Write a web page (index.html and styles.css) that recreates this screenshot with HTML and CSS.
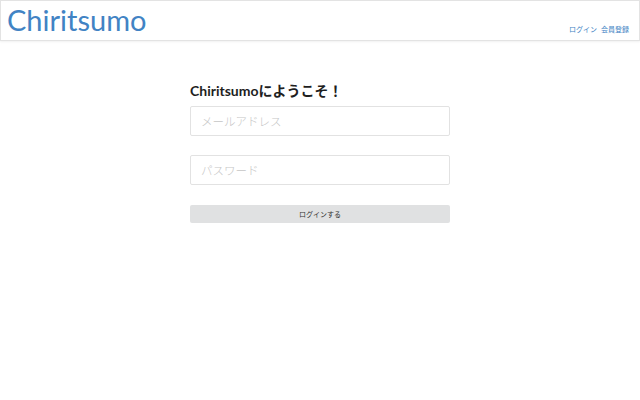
FILE: index.html
```html
<!DOCTYPE html>
<html lang="ja">
<head>
<meta charset="utf-8">
<title>Chiritsumo</title>
<link rel="stylesheet" href="styles.css">
</head>
<body>
<header class="topbar">
  <a class="logo" href="#">Chiritsumo</a>
  <nav class="nav">
    <a href="#">ログイン</a>
    <a href="#">会員登録</a>
  </nav>
</header>
<main class="main">
  <form class="login">
    <h1 class="title">Chiritsumoにようこそ！</h1>
    <input class="field" type="email" placeholder="メールアドレス">
    <input class="field" type="password" placeholder="パスワード">
    <button class="btn" type="button">ログインする</button>
  </form>
</main>
</body>
</html>
```
FILE: styles.css
```css
html, body {
  margin: 0;
  padding: 0;
  background: #fff;
  font-family: Lato, "Noto Sans CJK JP", sans-serif;
  color: #222;
}
.topbar {
  height: 39px;
  border: 1px solid #e3e3e3;
  box-shadow: 0 1px 2px rgba(0,0,0,0.06);
  display: flex;
  justify-content: space-between;
  align-items: flex-end;
  padding: 0 10px 0 6px;
}
.logo {
  align-self: center;
  font-size: 29px;
  color: #4183c4;
  text-decoration: none;
  line-height: 1;
  margin-top: -3px;
}
.nav {
  display: flex;
  gap: 4px;
  padding-bottom: 6px;
}
.nav a {
  font-size: 7px;
  color: #4183c4;
  text-decoration: none;
}
.main {
  display: flex;
  justify-content: center;
  padding-top: 40px;
}
.login {
  width: 260px;
  display: flex;
  flex-direction: column;
}
.title {
  margin: 0 0 5px;
  font-size: 14px;
  font-weight: 700;
  line-height: 20px;
  color: #1e1e1e;
}
.field {
  box-sizing: border-box;
  height: 30px;
  border: 1px solid #e2e2e2;
  border-radius: 2px;
  padding: 0 10px;
  font-size: 11.5px;
  font-weight: 300;
  font-family: inherit;
  margin-bottom: 19px;
  outline: none;
}
.field::placeholder {
  color: #c6c6c6;
}
.btn {
  height: 18px;
  margin-top: 1px;
  border: none;
  border-radius: 2px;
  background: #e0e1e2;
  color: #333;
  font-size: 7px;
  font-family: inherit;
  padding: 0;
}
```
